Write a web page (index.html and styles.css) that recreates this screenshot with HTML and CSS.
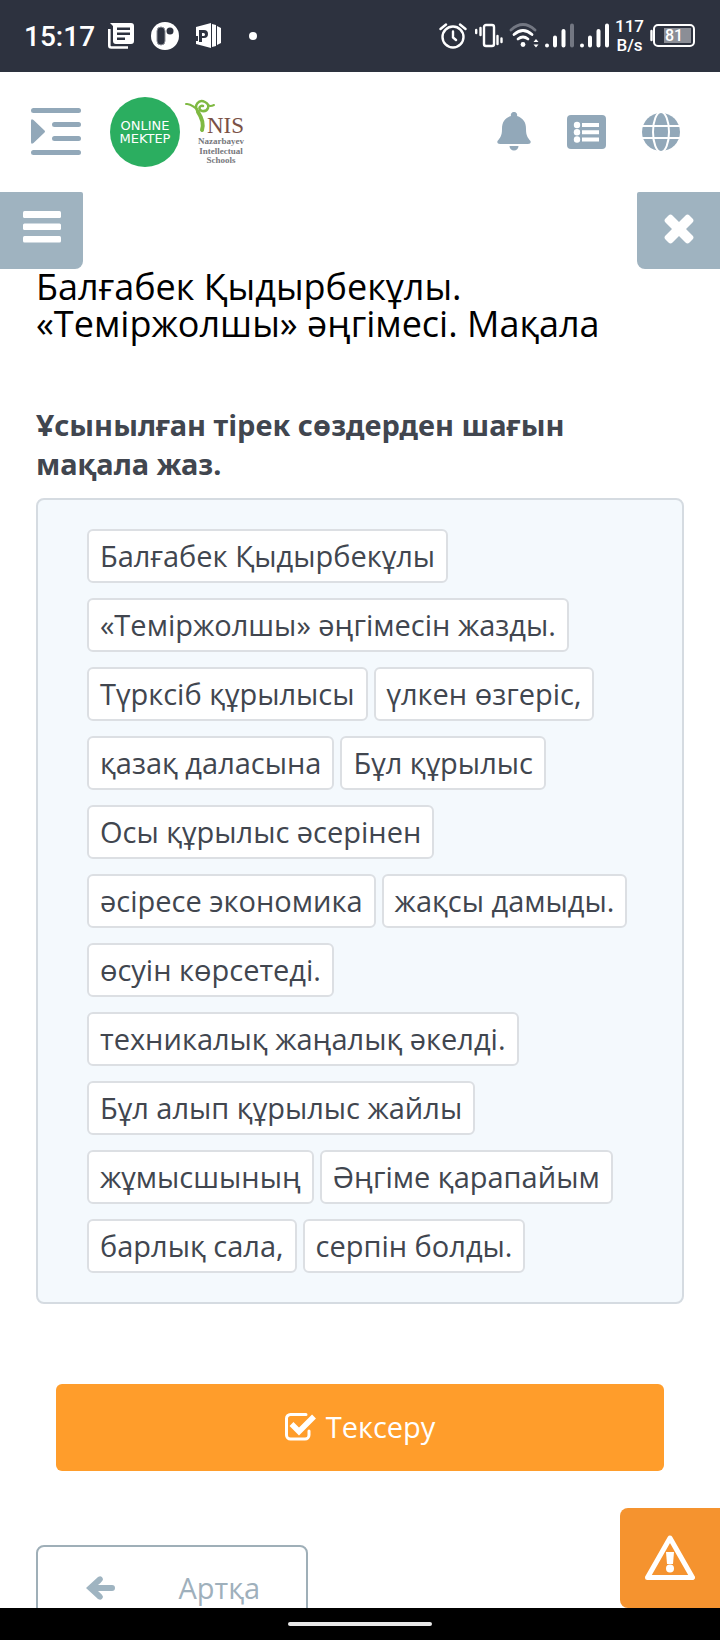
FILE: index.html
```
<!DOCTYPE html>
<html lang="kk">
<head>
<meta charset="utf-8">
<meta name="viewport" content="width=device-width, initial-scale=1">
<title>Online Mektep</title>
<link rel="stylesheet" href="styles.css">
</head>
<body>
<div class="statusbar">
  <div class="status-left">
    <span class="clock">15:17</span>
    <svg width="26" height="26" viewBox="0 0 26 26"><path fill="#fff" fill-rule="evenodd" d="M2 0H23a3 3 0 0 1 3 3V18a3 3 0 0 1-3 3H8a3 3 0 0 1-3-3V3zM9 4.500v2.500H22V4.500zM9 9.500v2.500H22V9.500zM9 14.500v2.500H17V14.500z"/><path d="M1.300 6V22.500a2 2 0 0 0 2 2H20" fill="none" stroke="#fff" stroke-width="2.600"/></svg>
    <svg width="28" height="28" viewBox="0 0 28 28"><circle cx="14" cy="14" r="14" fill="#fff"/><rect x="6" y="5" width="8" height="18" rx="4" fill="#2d323f" stroke="#8b8e96" stroke-width="1"/><circle cx="19" cy="9" r="3.500" fill="#2d323f"/></svg>
    <svg width="26" height="26" viewBox="0 0 26 26"><path fill="#fff" fill-rule="evenodd" d="M0 4L15 0V25L0 21V18H2V13H0zM3 7V19H6V15H8a4 4 0 0 0 0-8zM6 10H7.500a1.500 1.500 0 0 1 0 3H6z"/><path fill="#fff" d="M16 1L20 2V23L16 24zM21 3L25 5V20L21 22z"/></svg>
    <span class="dot"></span>
  </div>
  <div class="status-right">
    <svg width="28" height="26" viewBox="0 0 28 26" fill="none" stroke="#fff" stroke-width="2.400" stroke-linecap="round"><circle cx="14" cy="14" r="10.500"/><path d="M14 8.500V14.500L17 17M1.500 6L7 1.500M26.500 6L21 1.500"/></svg>
    <svg class="vibrate" width="28" height="26" viewBox="0 0 28 26" fill="none" stroke="#fff" stroke-width="2.400" stroke-linecap="round"><rect x="9" y="2" width="10" height="21" rx="2"/><path d="M5.500 5V12M1.200 7V10M22.500 13V21M26.500 15.500V19"/></svg>
    <svg width="30" height="26" viewBox="0 0 30 26" fill="none" stroke="#fff" stroke-width="2.800" stroke-linecap="round"><path stroke="#737782" d="M2 7Q14 -4 26 7"/><path d="M5 11.500Q14 3.500 23 11.500M9 16Q14 12 19 16"/><circle cx="14" cy="21.500" r="2.400" fill="#fff" stroke="none"/><path fill="#fff" stroke="none" d="M24.500 19L27 16L29.500 19zM24.500 21.500H29.500L27 24.500z"/></svg>
    <svg width="29" height="26" viewBox="0 0 29 26" fill="none" stroke="#fff" stroke-width="4" stroke-linecap="round"><path d="M2 22.500V22.500M10 14.500V22.500M18.500 8V22.500"/><path stroke="#737782" d="M27 2.500V22.500"/></svg>
    <svg width="29" height="26" viewBox="0 0 29 26" fill="none" stroke="#fff" stroke-width="4" stroke-linecap="round"><path d="M2 22.500V22.500M10 14.500V22.500M18.500 8V22.500M27 2.500V22.500"/></svg>
    <span class="speed">117<br>B/s</span>
    <svg width="46" height="24" viewBox="0 0 46 24"><rect x="14" y="4" width="27" height="15" fill="#8b8e96"/><rect x="4" y="1" width="40" height="21" rx="4" fill="none" stroke="#fff" stroke-width="2"/><path d="M1.500 7V16" stroke="#fff" stroke-width="2.400" stroke-linecap="round"/><text class="battery-text" x="24" y="17" text-anchor="middle">81</text></svg>
  </div>
</div>

<header class="header">
  <button class="icon-button" aria-label="Menu">
    <svg width="50" height="48" viewBox="0 0 50 48" fill="#92a8b9"><rect width="50" height="5" rx="2.500"/><rect x="21" y="14" width="29" height="5" rx="2.500"/><rect x="21" y="28" width="29" height="5" rx="2.500"/><rect y="42" width="50" height="5" rx="2.500"/><path d="M0 13Q0 10 2.500 12L13 22Q15 23.500 13 25L2.500 35Q0 37 0 34z"/></svg>
  </button>
  <a class="logo" href="#" aria-label="Online Mektep">
    <svg width="70" height="70" viewBox="0 0 70 70"><circle cx="35" cy="35" r="35" fill="#2bae60"/><g class="mektep-text"><text x="35" y="33" text-anchor="middle">ONLINE</text><text x="35" y="46" text-anchor="middle">MEKTEP</text></g></svg>
    <svg width="62" height="70" viewBox="0 0 62 70"><g fill="none" stroke="#7fb942" stroke-linecap="round"><path stroke-width="4" d="M18 33C20 27 18 21 14 15"/><path stroke-width="2.500" d="M14 15C9 8 15 2 21 5C27 8 24 15 18 14C14 13 15 8 19 9"/><path stroke-width="2" d="M13 12C9 10 7 6 2 7M24 8C26 10 28 9 30 8"/></g><text class="nis" x="23" y="36">NIS</text><g class="nis-small"><text x="37" y="47" text-anchor="middle">Nazarbayev</text><text x="37" y="57" text-anchor="middle">Intellectual</text><text x="37" y="66" text-anchor="middle">Schools</text></g></svg>
  </a>
  <nav class="header-nav">
    <button class="icon-button" aria-label="Notifications">
      <svg width="34" height="40" viewBox="0 0 34 40" fill="#92a8b9"><path d="M17 0a3 3 0 0 1 3 4C26 6 29 10 29 17C29 24 31 26 33.500 29Q34.500 32 31 32H3Q-.5 32 .5 29C3 26 5 24 5 17C5 10 8 6 14 4a3 3 0 0 1 3-4z"/><path d="M12.500 34H21.500a4.500 4.500 0 0 1-9 0z"/></svg>
    </button>
    <button class="icon-button" aria-label="List">
      <svg width="39" height="34" viewBox="0 0 39 34"><rect width="39" height="34" rx="4" fill="#92a8b9"/><g fill="#fff"><circle cx="10" cy="10" r="3.200"/><circle cx="10" cy="17.200" r="3.200"/><circle cx="10" cy="24.500" r="3.200"/><path d="M15 8H32V12H15zM15 15.200H32V19.200H15zM15 22.500H32V26.500H15z"/></g></svg>
    </button>
    <button class="icon-button" aria-label="Language">
      <svg width="38" height="38" viewBox="0 0 38 38"><circle cx="19" cy="19" r="19" fill="#92a8b9"/><g fill="none" stroke="#fff" stroke-width="2"><path d="M0 13H38M0 25H38"/><ellipse cx="19" cy="19" rx="8" ry="20"/></g></svg>
    </button>
  </nav>
</header>

<main class="content">
  <div class="side-buttons">
    <button class="side-button side-left" aria-label="Open contents">
      <svg width="38" height="32" viewBox="0 0 38 32" fill="#fff"><rect width="38" height="7" rx="1.500"/><rect y="12.500" width="38" height="6.500" rx="1.500"/><rect y="25" width="38" height="6.500" rx="1.500"/></svg>
    </button>
    <button class="side-button side-right" aria-label="Close">
      <svg width="30" height="30" viewBox="0 0 30 30"><path d="M4.500 1.500Q6.500 -.5 8.500 1.500L15 8L21.500 1.500Q23.500 -.5 25.500 1.500L28.500 4.500Q30.500 6.500 28.500 8.500L22 15L28.500 21.500Q30.500 23.500 28.500 25.500L25.500 28.500Q23.500 30.500 21.500 28.500L15 22L8.500 28.500Q6.500 30.500 4.500 28.500L1.500 25.500Q-.5 23.500 1.500 21.500L8 15L1.500 8.500Q-.5 6.500 1.500 4.500z" fill="#fff"/></svg>
    </button>
  </div>

  <div class="lesson">
    <h1 class="title">Балғабек Қыдырбекұлы. «Теміржолшы» әңгімесі. Мақала</h1>
    <p class="prompt">Ұсынылған тірек сөздерден шағын мақала жаз.</p>
    <div class="words">
      <button class="word">Балғабек Қыдырбекұлы</button>
      <button class="word">«Теміржолшы» әңгімесін жазды.</button>
      <button class="word">Түрксіб құрылысы</button>
      <button class="word">үлкен өзгеріс,</button>
      <button class="word">қазақ даласына</button>
      <button class="word">Бұл құрылыс</button>
      <button class="word">Осы құрылыс әсерінен</button>
      <button class="word">әсіресе экономика</button>
      <button class="word">жақсы дамыды.</button>
      <button class="word">өсуін көрсетеді.</button>
      <button class="word">техникалық жаңалық әкелді.</button>
      <button class="word">Бұл алып құрылыс жайлы</button>
      <button class="word">жұмысшының</button>
      <button class="word">Әңгіме қарапайым</button>
      <button class="word">барлық сала,</button>
      <button class="word">серпін болды.</button>
    </div>
    <button class="check">
      <svg width="31" height="28" viewBox="0 0 31 28" fill="none" stroke="#fff" stroke-linecap="round"><path stroke-width="3" d="M21 1.500H5.500a4 4 0 0 0-4 4V22a4 4 0 0 0 4 4H20a4 4 0 0 0 4-4V18"/><path stroke-width="5.500" stroke-linecap="butt" d="M6.500 11L14 18.500L29 3.500"/></svg>
      Тексеру
    </button>
    <button class="back">
      <svg width="29" height="24" viewBox="0 0 29 24"><path fill="#9fb4c1" d="M0 12L12 1Q16 -1 17 3Q17 5 12 9H26a3 3 0 0 1 0 6H12Q17 19 17 21Q16 25 12 23z"/></svg>
      Артқа
    </button>
  </div>
</main>

<button class="report" aria-label="Report a problem">
  <svg width="50" height="46" viewBox="0 0 50 46"><path d="M25 3L47.500 42.500H2.500z" fill="none" stroke="#fff" stroke-width="5" stroke-linejoin="round"/><path fill="#fff" d="M21 17H29L28 29H22z"/><circle cx="25" cy="33.500" r="4" fill="#fff"/></svg>
</button>
<div class="homebar"><span class="homebar-line"></span></div>
</body>
</html>
```
FILE: styles.css
```
* {
  box-sizing: border-box;
}
body {
  margin: 0;
  height: 100vh;
  display: flex;
  flex-direction: column;
  overflow: hidden;
  background-color: #fff;
  font-family: "Open Sans", "Noto Sans", sans-serif;
  color: #41464f;
}
button {
  font-family: inherit;
  cursor: pointer;
}
svg {
  display: block;
  flex-shrink: 0;
}

/* phone status bar */
.statusbar {
  flex-shrink: 0;
  display: flex;
  justify-content: space-between;
  align-items: center;
  height: 72px;
  padding: 0 24px;
  background-color: #2d323f;
  color: #fff;
  font-family: Roboto, sans-serif;
  font-weight: 500;
}
.status-left {
  display: flex;
  align-items: center;
  gap: 17px;
}
.clock {
  margin-right: -4px;
  font-size: 28px;
}
.dot {
  width: 8px;
  height: 8px;
  margin-left: 10px;
  border-radius: 50%;
  background-color: #fff;
}
.status-right {
  display: flex;
  align-items: center;
  gap: 6px;
}
.vibrate {
  margin-left: 2px;
}
.speed {
  font-size: 17px;
  line-height: 19px;
  text-align: center;
}
.battery-text {
  font-size: 16px;
  fill: #fff;
}

/* site header */
.header {
  flex-shrink: 0;
  display: flex;
  align-items: center;
  height: 120px;
  padding: 0 40px 0 31px;
}
.icon-button {
  padding: 0;
  border: none;
  background: none;
}
.logo {
  display: flex;
  gap: 4px;
  margin-left: 29px;
}
.mektep-text {
  font-family: "DejaVu Sans", sans-serif;
  font-size: 13px;
  fill: #fff;
}
.nis {
  font-family: "Liberation Serif", serif;
  font-size: 23px;
  fill: #7a5146;
}
.nis-small {
  font-family: "Liberation Serif", serif;
  font-size: 9px;
  font-weight: bold;
  fill: #77787c;
}
.header-nav {
  display: flex;
  align-items: center;
  gap: 36px;
  margin-left: auto;
}

/* lesson */
.content {
  flex: 1;
  min-height: 0;
  overflow: hidden;
}
.side-buttons {
  display: flex;
  justify-content: space-between;
}
.side-button {
  display: flex;
  justify-content: center;
  width: 83px;
  height: 77px;
  padding: 19px 0 0;
  border: none;
  background-color: #9fb3c0;
}
.side-left {
  border-radius: 0 2px 8px 0;
}
.side-right {
  padding-top: 22px;
  border-radius: 2px 0 0 8px;
}
.lesson {
  padding: 0 36px;
}
.title {
  margin: -1px 0 63px;
  font-size: 36px;
  line-height: 37px;
  font-weight: 400;
  color: #000;
}
.prompt {
  margin: 0 0 15px;
  font-family: "Noto Sans", sans-serif;
  font-size: 29px;
  line-height: 39px;
  font-weight: 700;
}
.words {
  display: flex;
  flex-wrap: wrap;
  gap: 15px 6px;
  padding: 29px 49px;
  border: 2px solid #d5dbe1;
  border-radius: 8px;
  background-color: #f4f9fd;
}
.word {
  height: 54px;
  padding: 0 11px 2px;
  border: 2px solid #dcdfe3;
  border-radius: 6px;
  background-color: #fff;
  font-size: 29px;
  line-height: 39px;
  color: #41464f;
}
.check {
  display: flex;
  justify-content: center;
  align-items: center;
  gap: 10px;
  width: calc(100% - 40px);
  height: 87px;
  margin: 80px 20px 74px;
  padding: 0 0 2px;
  border: none;
  border-radius: 6px;
  background-color: #ff9d2b;
  font-size: 29px;
  color: #fff;
}
.back {
  display: flex;
  justify-content: space-between;
  align-items: center;
  width: 42%;
  height: 87px;
  padding: 0 46px 2px 48px;
  border: 2px solid #9fafb8;
  border-radius: 8px;
  background-color: #fff;
  font-size: 29px;
  color: #9fb0bc;
}

/* stays over the page, above the home bar */
.report {
  position: fixed;
  right: 0;
  bottom: 32px;
  display: flex;
  justify-content: center;
  align-items: center;
  width: 100px;
  height: 100px;
  padding: 0;
  border: none;
  border-radius: 8px 0 0 8px;
  background-color: #f5932f;
}
.homebar {
  flex-shrink: 0;
  display: flex;
  justify-content: center;
  align-items: center;
  height: 32px;
  background-color: #000;
}
.homebar-line {
  width: 20%;
  height: 4px;
  border-radius: 2px;
  background-color: #e8e8e8;
}
```
